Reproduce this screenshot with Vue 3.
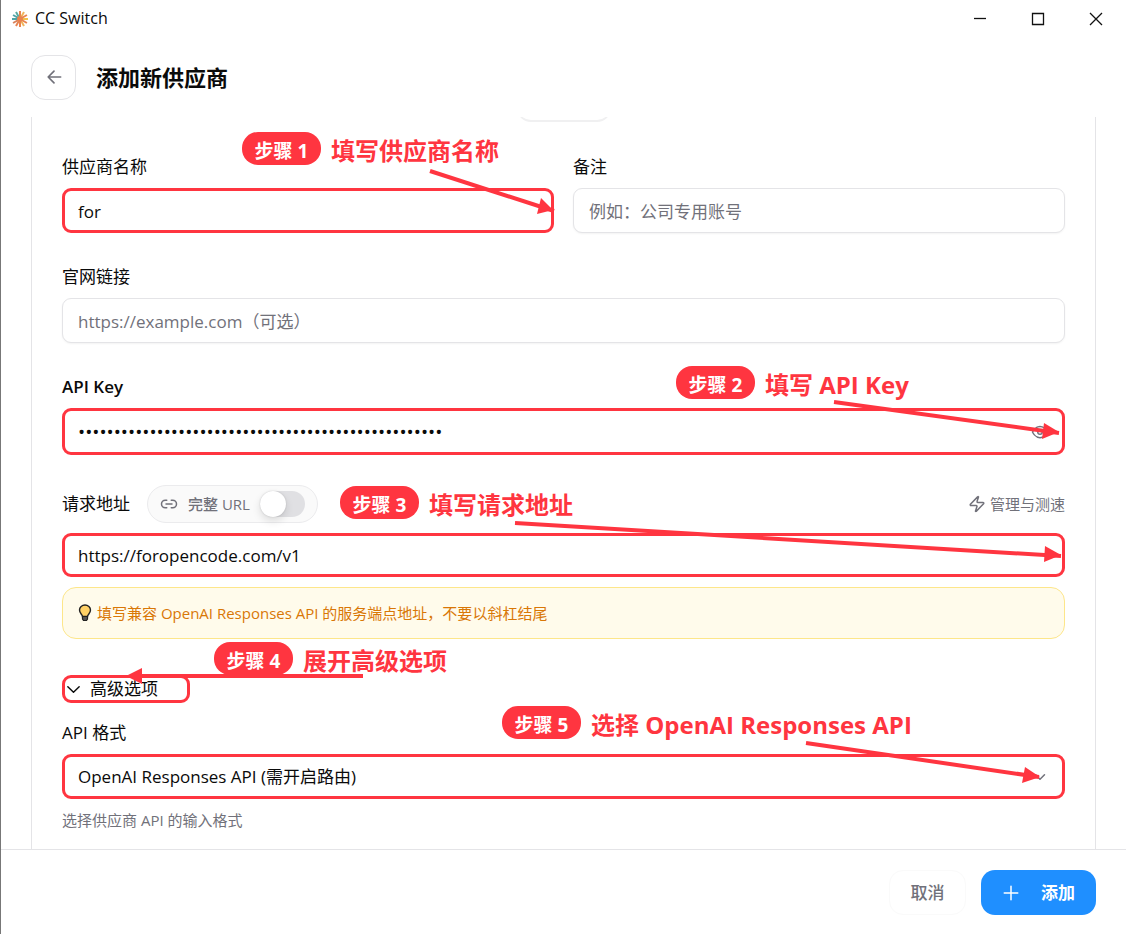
<script setup>
import { ref } from 'vue'

const name = ref('for')
const remark = ref('')
const website = ref('')
const apiKey = ref('k'.repeat(51))
const showKey = ref(false)
const baseUrl = ref('https://foropencode.com/v1')
const fullUrl = ref(false)
const format = ref('responses')

const rays = [
  '#e8834f', '#f0b45a', '#e8834f', '#f2c14e', '#e8834f', '#f0b45a',
  '#e8834f', '#e8834f', '#d9825b', '#4fa3a5', '#4fa3a5', '#5aa9a0'
]

const steps = [
  { id: 1, text: '填写供应商名称' },
  { id: 2, text: '填写 API Key' },
  { id: 3, text: '填写请求地址' },
  { id: 4, text: '展开高级选项' },
  { id: 5, text: '选择 OpenAI Responses API' }
]

const arrows = [
  { line: 'M430 171 L554 211', head: '541,198 553,210 537,214' },
  { line: 'M834 402 L1059 433', head: '1044,423 1059,432 1042,439' },
  { line: 'M515 523 L1061 556', head: '1045,546 1061,555 1044,562' },
  { line: 'M363 676 L130 676', head: '142,668 126,676 142,684' },
  { line: 'M806 743 L1039 777', head: '1025,767 1040,777 1022,783' }
]
</script>

<template>
  <div class="window">
    <div class="titlebar">
      <svg class="logo" viewBox="0 0 16 16">
        <line v-for="(color, i) in rays" :key="i" x1="8" y1="7" x2="8" y2="0" :stroke="color" :transform="`rotate(${i * 30} 8 8)`" />
        <circle cx="8" cy="8" r="3" fill="#e8834f" />
      </svg>
      <span class="app-name">CC Switch</span>
      <div class="window-buttons">
        <button type="button" aria-label="最小化">
          <svg viewBox="0 0 14 14"><path d="M1 6.5h12" /></svg>
        </button>
        <button type="button" aria-label="最大化">
          <svg viewBox="0 0 14 14"><path d="M1.5 1.5h11v11h-11z" /></svg>
        </button>
        <button type="button" aria-label="关闭">
          <svg viewBox="0 0 14 14"><path d="M1 1l12 12M13 1L1 13" /></svg>
        </button>
      </div>
    </div>

    <header class="header">
      <button class="back" type="button" aria-label="返回">
        <svg class="icon" viewBox="0 0 24 24"><path d="m12 19-7-7 7-7M20 12H5" /></svg>
      </button>
      <h1>添加新供应商</h1>
    </header>

    <main class="content">
      <form id="provider-form" class="panel" @submit.prevent>
        <div class="tab-edge"></div>

        <div class="row">
          <div class="field">
            <label for="name">供应商名称</label>
            <input id="name" class="input marked" type="text" v-model="name">
          </div>
          <div class="field">
            <label for="remark">备注</label>
            <input id="remark" class="input" type="text" v-model="remark" placeholder="例如：公司专用账号">
          </div>
        </div>

        <div class="field">
          <label for="website">官网链接</label>
          <input id="website" class="input" type="text" v-model="website" placeholder="https://example.com（可选）">
        </div>

        <div class="field key-field">
          <label for="key" class="strong">API Key</label>
          <div class="control">
            <input id="key" class="input marked key" :type="showKey ? 'text' : 'password'" v-model="apiKey" autocomplete="off">
            <button class="eye" type="button" aria-label="显示密钥" @click="showKey = !showKey">
              <svg class="icon" viewBox="0 0 24 24">
                <path d="M2 12s3.5-7.500 10-7.500S22 12 22 12s-3.500 7.500-10 7.500S2 12 2 12Z" />
                <circle cx="12" cy="12" r="3" />
              </svg>
            </button>
          </div>
        </div>

        <div class="field url-field">
          <div class="url-head">
            <label for="url">请求地址</label>
            <label class="pill">
              <svg class="icon" viewBox="0 0 24 24"><path d="M9 17H7A5 5 0 0 1 7 7h2M15 7h2a5 5 0 1 1 0 10h-2M8 12h8" /></svg>
              <span>完整 URL</span>
              <input type="checkbox" class="switch" v-model="fullUrl">
            </label>
            <button class="speed" type="button">
              <svg class="icon" viewBox="0 0 24 24"><path d="M4 14a1 1 0 0 1-.78-1.630l9.900-10.200a.5.5 0 0 1 .86.460l-1.920 6.020A1 1 0 0 0 13 10h7a1 1 0 0 1 .78 1.630l-9.900 10.200a.5.5 0 0 1-.86-.460l1.920-6.020A1 1 0 0 0 11 14z" /></svg>
              管理与测速
            </button>
          </div>
          <input id="url" class="input marked url" type="text" v-model="baseUrl">
          <p class="notice">
            <svg class="bulb" viewBox="0 0 14 18">
              <path d="M4.500 12.500C4.500 10.500 1.500 9.500 1.500 6a5.500 5 0 0 1 11 0c0 3.500-3 4.500-3 6.500z" fill="#ffd166" stroke="#222" stroke-width="1.400" />
              <path d="M4.500 12.500h5v2.500l-1 1.500h-3l-1-1.500z" fill="#555" stroke="#222" stroke-width="1.200" />
            </svg>
            填写兼容 OpenAI Responses API 的服务端点地址，不要以斜杠结尾
          </p>
        </div>

        <button class="advanced" type="button">
          <svg class="icon" viewBox="0 0 24 24"><path d="m4 8 8 8 8-8" /></svg>
          高级选项
        </button>

        <div class="field">
          <label for="format">API 格式</label>
          <div class="control">
            <select id="format" class="input marked" v-model="format">
              <option value="responses">OpenAI Responses API (需开启路由)</option>
            </select>
            <svg class="icon chevron" viewBox="0 0 24 24"><path d="m6 9 6 6 6-6" /></svg>
          </div>
          <p class="help">选择供应商 API 的输入格式</p>
        </div>
      </form>
    </main>

    <footer class="footer">
      <button class="cancel" type="button">取消</button>
      <button class="submit" type="submit" form="provider-form">
        <svg class="icon" viewBox="0 0 24 24"><path d="M3 12h18M12 3v18" /></svg>
        添加
      </button>
    </footer>

    <!-- 步骤标注 -->
    <div class="guide">
      <div v-for="step in steps" :key="step.id" class="step" :class="`step-${step.id}`">
        <span class="badge">步骤 {{ step.id }}</span>
        <strong>{{ step.text }}</strong>
      </div>
      <svg class="arrows">
        <g v-for="(arrow, i) in arrows" :key="i">
          <path :d="arrow.line" />
          <polygon :points="arrow.head" />
        </g>
      </svg>
    </div>
  </div>
</template>

<style>
body {
  margin: 0;
  background: #fff;
}
</style>

<style scoped>
* {
  box-sizing: border-box;
}

.window {
  position: relative;
  display: flex;
  flex-direction: column;
  height: 100vh;
  overflow: hidden;
  border-left: 1px solid #777;
  color: #0a0a0a;
  font-family: "Open Sans", "Noto Sans CJK SC", sans-serif;
  font-size: 17px;
  line-height: 24px;
}

button,
input,
select {
  font: inherit;
  color: inherit;
}

button {
  display: flex;
  align-items: center;
  padding: 0;
  border: 0;
  background: none;
  cursor: pointer;
}

h1,
p {
  margin: 0;
}

.icon {
  flex: none;
  width: 18px;
  height: 18px;
  fill: none;
  stroke: currentColor;
  stroke-width: 2;
  stroke-linecap: round;
  stroke-linejoin: round;
}

.titlebar {
  display: flex;
  align-items: center;
  height: 37px;
  padding-left: 11px;
}

.logo {
  width: 16px;
  height: 16px;
  margin-right: 7px;
  stroke-width: 2;
}

.app-name {
  padding-bottom: 2px;
  font-size: 16px;
}

.window-buttons {
  display: flex;
  margin-left: auto;
  margin-right: 1px;
}

.window-buttons button {
  justify-content: center;
  width: 58px;
  height: 36px;
}

.window-buttons svg {
  width: 14px;
  height: 14px;
  fill: none;
  stroke: #111;
  stroke-width: 1.3;
}

.header {
  display: flex;
  align-items: center;
  height: 80px;
  padding: 0 30px;
  gap: 20px;
}

.header h1 {
  font-size: 22px;
  font-weight: 700;
}

.back {
  justify-content: center;
  width: 45px;
  height: 45px;
  border: 1px solid #e4e4e7;
  border-radius: 14px;
  color: #71717a;
}

.back .icon {
  width: 20px;
  height: 20px;
}

.content {
  flex: 1;
  min-height: 0;
  padding: 0 30px;
  overflow: hidden;
}

.panel {
  display: flex;
  flex-direction: column;
  min-height: 100%;
  padding: 0 30px;
  border: solid #e4e4e7;
  border-width: 0 1px;
}

/* 上方标签栏滚出可视区后只露出底边 */
.tab-edge {
  flex: none;
  align-self: center;
  width: 94px;
  height: 45px;
  margin: -40px 0 33px;
  border: 1px solid #f0f0f1;
  border-bottom-width: 2px;
  border-radius: 14px;
}

.row {
  display: grid;
  grid-template-columns: 1fr 1fr;
  gap: 19px;
}

.field {
  display: flex;
  flex-direction: column;
  gap: 9px;
}

.row,
.field {
  margin-bottom: 32px;
}

.row .field {
  margin-bottom: 0;
}

.strong {
  font-weight: 600;
}

.input {
  width: 100%;
  height: 45px;
  padding: 2px 15px 0;
  border: 1px solid #e4e4e7;
  border-radius: 9px;
  outline: none;
  background: #fff;
  box-shadow: 0 1px 2px #0000000d;
  appearance: none;
}

.input::placeholder {
  color: #71717a;
  opacity: 1;
}

.input.marked {
  padding: 1px 13px 0;
  border: 3px solid #ff3540;
  box-shadow: none;
}

.control {
  position: relative;
  display: flex;
}

.input.key {
  height: 47px;
  font-size: 19px;
}

.input.url {
  height: 44px;
}

.eye,
.chevron {
  position: absolute;
  top: 0;
  right: 16px;
  bottom: 0;
  margin: auto 0;
  color: #71717a;
}

.key-field {
  margin-bottom: 30px;
}

.url-field {
  gap: 10px;
}

.url-head {
  display: flex;
  align-items: center;
  gap: 17px;
}

.pill {
  display: flex;
  align-items: center;
  gap: 10px;
  height: 38px;
  padding: 0 12px;
  border: 1px solid #ebebed;
  border-radius: 19px;
  background: #fafafa;
  color: #71717a;
  font-size: 15px;
  font-weight: 500;
}

.switch {
  display: flex;
  align-items: center;
  width: 45px;
  height: 26px;
  margin: 0;
  border-radius: 13px;
  background: #e0e0e3;
  appearance: none;
  cursor: pointer;
}

.switch::before {
  content: "";
  width: 26px;
  height: 26px;
  border-radius: 50%;
  background: #fff;
  box-shadow: 0 4px 8px #0000001f, 0 0 2px #00000026;
}

.switch:checked {
  justify-content: flex-end;
  background: #1f8fff;
}

.speed {
  gap: 4px;
  margin-left: auto;
  color: #71717a;
  font-size: 15px;
}

.notice {
  display: flex;
  align-items: center;
  gap: 5px;
  height: 52px;
  padding: 0 15px;
  border: 1px solid #fde68a;
  border-radius: 14px;
  background: #fffbeb;
  color: #d97706;
  font-size: 15px;
}

.bulb {
  width: 14px;
  height: 18px;
}

.advanced {
  align-self: flex-start;
  gap: 8px;
  width: 128px;
  height: 28px;
  margin: 4px 0 18px;
  border: 3px solid #ff3540;
  border-radius: 9px;
}

.advanced .icon {
  width: 17px;
  height: 17px;
}

.help {
  color: #71717a;
  font-size: 15px;
}

.footer {
  display: flex;
  align-items: center;
  justify-content: flex-end;
  gap: 15px;
  height: 85px;
  padding: 0 30px;
  border-top: 1px solid #e4e4e7;
}

.footer button {
  justify-content: center;
  height: 45px;
  padding-top: 2px;
  border-radius: 14px;
}

.cancel {
  width: 77px;
  border: 1px solid #fafafa;
  color: #71717a;
  font-weight: 500;
}

.submit {
  gap: 21px;
  width: 115px;
  background: #1f8fff;
  color: #fff;
  font-weight: 700;
}

.guide,
.arrows {
  position: absolute;
  inset: 0;
  width: 100%;
  height: 100%;
  pointer-events: none;
}

.guide {
  left: -1px;
}

.arrows {
  fill: #ff3540;
  stroke: #ff3540;
}

.arrows path {
  fill: none;
  stroke-width: 4;
}

.arrows polygon {
  stroke: none;
}

.step {
  position: absolute;
  display: flex;
  gap: 10px;
  color: #ff3540;
  white-space: nowrap;
}

.step strong {
  padding-top: 3px;
  font-size: 24px;
  line-height: 32px;
}

.badge {
  width: 79px;
  height: 33px;
  padding-top: 3px;
  border-radius: 16px;
  background: #ff3540;
  color: #fff;
  font-size: 19px;
  font-weight: 700;
  line-height: 32px;
  text-align: center;
}

.step-1 {
  left: 242px;
  top: 132px;
}

.step-2 {
  left: 676px;
  top: 366px;
}

.step-3 {
  left: 340px;
  top: 486px;
}

.step-4 {
  left: 214px;
  top: 642px;
}

.step-5 {
  left: 502px;
  top: 706px;
}
</style>
